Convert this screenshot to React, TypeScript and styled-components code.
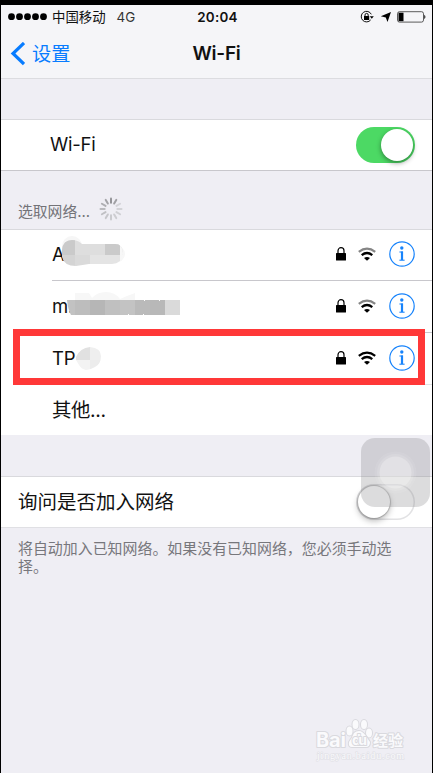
import React from 'react';
import styled, { createGlobalStyle } from 'styled-components';

const GlobalStyle = createGlobalStyle`
  * { box-sizing: border-box; }
  body { margin: 0; background: #000; }
`;

const Screen = styled.main`
  position: relative;
  width: 433px;
  height: 773px;
  overflow: hidden;
  border: solid #000;
  border-width: 5px 1px 0;
  background: #efeef4;
  color: #111;
  font-family: Inter, 'Noto Sans CJK SC', sans-serif;
`;

const Header = styled.header`
  height: 74px;
  background: #f5f5f8;
  border-bottom: 1px solid #dcdce0;
`;

const StatusBar = styled.div`
  display: grid;
  grid-template-columns: 1fr auto 1fr;
  align-items: center;
  height: 24px;
  padding: 0 6px 0 7px;
  font-size: 13.4px;
  line-height: 24px;
`;

const Carrier = styled.div`
  display: flex;
  align-items: center;
  gap: 5px;
`;

const Network = styled.span`
  margin-left: 6px;
  font-size: 13.4px;
  font-weight: 400;
  color: #333;
`;

const Clock = styled.span`
  padding-left: 1px;
  font-size: 13.4px;
  font-weight: 600;
  letter-spacing: 0.3px;
`;

const StatusIcons = styled.div`
  display: flex;
  justify-content: flex-end;
  align-items: center;
`;

const NavBar = styled.nav`
  display: grid;
  grid-template-columns: 1fr auto 1fr;
  align-items: center;
  height: 49px;
  padding: 0 9px;
`;

const BackLink = styled.span`
  display: flex;
  align-items: center;
  gap: 7px;
  color: #087cff;
  font-size: 19.2px;
  line-height: 28px;
`;

const Title = styled.h1`
  margin: 0;
  font-size: 19px;
  font-weight: 600;
  letter-spacing: -0.25px;
  line-height: 28px;
`;

const Group = styled.section<{ $top: number }>`
  margin-top: ${(p) => p.$top}px;
  background: #fff;
  border-top: 1px solid #d9d9dd;
`;

const SettingRow = styled.div<{ $indent: number; $line: string }>`
  display: flex;
  align-items: center;
  justify-content: space-between;
  height: 51px;
  padding: 0 17px 0 ${(p) => p.$indent}px;
  border-bottom: 1px solid ${(p) => p.$line};
  font-size: 19.5px;
  line-height: 30px;
`;

const Latin = styled.span`
  padding-bottom: 2px;
  font-size: 18.5px;
  letter-spacing: -0.2px;
`;

const Track = styled.span<{ $on: boolean }>`
  display: flex;
  justify-content: ${(p) => (p.$on ? 'flex-end' : 'flex-start')};
  width: 59px;
  height: 36px;
  padding: 2px;
  border-radius: 18px;
  background: ${(p) => (p.$on ? '#4cd964' : '#fff')};
  box-shadow: ${(p) => (p.$on ? 'none' : 'inset 0 0 0 1.5px #e2e2e4')};
`;

const Knob = styled.span<{ $on: boolean }>`
  width: 32px;
  height: 32px;
  border-radius: 50%;
  background: #fff;
  box-shadow: ${(p) =>
    p.$on ? '0 2px 5px rgba(0,0,0,.4)' : '0 0 1px 1px rgba(0,0,0,.2), 0 3px 6px rgba(0,0,0,.28)'};
`;

const SectionLabel = styled.div`
  display: flex;
  align-items: center;
  gap: 9px;
  height: 58px;
  padding: 18px 0 0 17px;
  color: #737378;
  font-size: 14.8px;
  line-height: 22px;
`;

const LabelText = styled.span`
  padding-top: 5px;
`;

const NetworkRow = styled.div`
  display: flex;
  align-items: center;
  height: 52px;
  margin-left: 51px;
  padding: 0 17px 2px 0;
  border-bottom: 1px solid #c8c7cc;
  font-size: 19px;
  line-height: 30px;
  &:first-child { height: 51px; }
  &:nth-child(3) { border-bottom-color: #e2e2e5; }
  &:last-child { border-bottom: 0; height: 50px; padding-bottom: 0; }
`;

const NetworkName = styled.span`
  position: relative;
  flex: 1;
  font-size: 18.5px;
  letter-spacing: -0.2px;
`;

const OtherName = styled.span`
  font-size: 19.4px;
  letter-spacing: -0.35px;
`;

const Blur = styled.svg`
  position: absolute;
  left: 0;
  top: -3px;
  overflow: visible;
`;

const RowIcons = styled.span`
  display: flex;
  align-items: center;
  gap: 12px;
  & > svg:last-child { margin-left: 1px; }
`;

const Highlight = styled.div`
  position: absolute;
  left: 12px;
  top: 324px;
  width: 412px;
  height: 56px;
  border: 7px solid #ff3838;
`;

const Footnote = styled.p`
  margin: 0;
  padding: 12px 36px 0 17px;
  color: #77777c;
  font-size: 14.95px;
  line-height: 18.3px;
`;

const AssistiveTouch = styled.div`
  position: absolute;
  left: 360px;
  top: 433px;
  width: 69px;
  height: 69px;
  border-radius: 14px;
  background: rgba(125, 125, 130, 0.27);
`;

const Ring = styled.svg`
  display: block;
`;

const Watermark = styled.svg`
  position: absolute;
  left: 311px;
  top: 709px;
`;

const LockIcon = () => (
  <svg width="10" height="14" viewBox="0 0 10 14">
    <path d="M2 7V3.7a3 3 0 0 1 6 0V7" fill="none" stroke="#000" strokeWidth="1.2" />
    <rect x="0" y="6" width="10" height="7.5" rx=".5" />
  </svg>
);

const WifiIcon = ({ strong }: { strong: boolean }) => (
  <svg width="18" height="14" viewBox="0 0 18 14" fill="none">
    <path d="M.8 4.8Q9-1.4 17.2 4.800" stroke={strong ? '#000' : '#858585'} strokeWidth="2.2" />
    <path d="M3.700 8.200Q9 3.800 14.300 8.200" stroke="#000" strokeWidth="2.2" />
    <path d="M6 11Q9 8.800 12 11L9 13.800z" fill="#000" />
  </svg>
);

const InfoIcon = () => (
  <svg width="26" height="26" viewBox="0 0 26 26" fill="none" stroke="#1783fb">
    <circle cx="13" cy="13" r="12.2" strokeWidth="1.2" />
    <circle cx="12.800" cy="7" r="1.700" fill="#1783fb" stroke="none" />
    <path d="M10.400 11H13.400V19" strokeWidth="1.1" />
    <path d="M13 10.500V19" strokeWidth="2.2" />
    <path d="M10.400 19.200H15.600" strokeWidth="1.1" />
  </svg>
);

const spokeColors = [
  '#949498', '#a0a0a4', '#d4d4d8', '#d2d2d6', '#d0d0d4', '#cdcdd1',
  '#cacace', '#c6c6ca', '#c0c0c4', '#b9b9bd', '#aeaeb2', '#a4a4a8',
];

const Spinner = () => (
  <svg width="24" height="24" viewBox="-12 -12 24 24">
    {spokeColors.map((color, i) => (
      <path
        key={i}
        d="M0-6.3V-10.5"
        stroke={color}
        strokeWidth="2"
        strokeLinecap="round"
        transform={`rotate(${i * 30})`}
      />
    ))}
  </svg>
);

const MosaicA = () => (
  <Blur width="120" height="44">
    <defs>
      <clipPath id="smudge-a">
        <path d="M10 14Q11 4 20 4Q26 4 30 8H63Q71 8 71 17.500Q70 27.500 60 28H37L24 30Q12 30 10 21z" />
      </clipPath>
    </defs>
    <circle cx="20" cy="10" r="10" fill="#f6f6f6" />
    <ellipse cx="63" cy="18" rx="10" ry="9" fill="#f7f7f7" />
    <g clipPath="url(#smudge-a)">
      <path fill="#dedede" d="M10 4h61v15H10z" />
      <path fill="#cacaca" d="M10 4h13v15H10zM53 4h15v15H53z" />
      <path fill="#d4d4d4" d="M10 19h13v12H10z" />
      <path fill="#dadada" d="M23 19h15v12H23z" />
      <path fill="#e4e4e4" d="M38 19h30v12H38z" />
      <path fill="#f7f7f7" d="M68 4h4v27h-4z" />
    </g>
  </Blur>
);

const MosaicM = () => (
  <Blur width="140" height="44">
    <g transform="translate(0 1)">
      <path fill="#f7f7f7" d="M23 4h14l3 5q5-6 14-6t14 7l7-3 8-3v7H23z" />
      <path fill="#c2c2c2" d="M15 11h8v15h-4q-3-5-4-15z" />
      {['#bdbdbd', '#b6b6b6', '#c0c0c0', '#c3c3c3', '#bababa', '#b8b8b8', '#dadada'].map((c, i) => (
        <rect key={i} x={23 + i * 15} y="11" width="15" height="15" fill={c} />
      ))}
      <path fill="#fff" d="M92 11h1v1h-1zM107 11h1v1h-1zM76 25h1v1h-1zM91 25h1v1h-1z" />
    </g>
  </Blur>
);

const MosaicT = () => (
  <Blur width="80" height="44">
    <defs>
      <clipPath id="smudge-t">
        <path d="M24 17Q28 8 38 7Q49 8 49 16Q49 24 43 27Q38 30 34 30Q29 29 27 25L24 20z" />
      </clipPath>
    </defs>
    <g clipPath="url(#smudge-t)">
      <path fill="#e1e1e1" d="M23 6h15v14H23z" />
      <path fill="#efefef" d="M38 6h14v14H38z" />
      <path fill="#f3f3f3" d="M23 20h15v11H23z" />
      <path fill="#ececec" d="M38 20h14v11H38z" />
    </g>
  </Blur>
);

const networks = [
  { name: 'A', strong: false, smudge: <MosaicA /> },
  { name: 'm.', strong: false, smudge: <MosaicM /> },
  { name: 'TP', strong: true, smudge: <MosaicT /> },
];

const Toggle = ({ on }: { on: boolean }) => (
  <Track $on={on}>
    <Knob $on={on} />
  </Track>
);

export default function App() {
  return (
    <>
      <GlobalStyle />
      <Screen>
        <Header>
          <StatusBar>
            <Carrier>
              <svg width="39" height="8" viewBox="0 0 39 8">
                {[3.5, 11.5, 19.5, 27.5, 35.5].map((x) => (
                  <circle key={x} cx={x} cy="3.7" r="3.4" />
                ))}
              </svg>
              <span>中国移动</span>
              <Network>4G</Network>
            </Carrier>
            <Clock>20:04</Clock>
            <StatusIcons>
              <svg width="66" height="14" viewBox="0 0 66 14">
                <path d="M10.700 9.900A5.300 5.300 0 1 1 11.300 4.300" fill="none" stroke="#111" strokeWidth="1" />
                <path d="M9.800 6.200h4l-2 2.600z" />
                <rect x="4" y="6" width="5.200" height="4" />
                <path d="M5 6.500V5a1.600 1.600 0 0 1 3.200 0v1.500" fill="none" stroke="#111" strokeWidth="1" />
                <path d="M31 2L27.500 12L25.800 7.500L20.800 6.200z" />
                <rect x="37.500" y="1.700" width="26" height="10.400" rx="2" fill="none" stroke="#333" strokeWidth=".8" />
                <rect x="38.500" y="2.700" width="5" height="8.500" />
                <path d="M64.300 4.800q2.200 2.200 0 4.400z" />
              </svg>
            </StatusIcons>
          </StatusBar>
          <NavBar>
            <BackLink>
              <svg width="15" height="24" viewBox="0 0 15 24">
                <path d="M14 1L3 11.500L14 22" fill="none" stroke="#087cff" strokeWidth="3.2" />
              </svg>
              设置
            </BackLink>
            <Title>Wi-Fi</Title>
          </NavBar>
        </Header>

        <Group $top={40}>
          <SettingRow $indent={49} $line="#c8c7cc">
            <Latin>Wi-Fi</Latin>
            <Toggle on />
          </SettingRow>
        </Group>

        <SectionLabel>
          <LabelText>选取网络...</LabelText>
          <Spinner />
        </SectionLabel>

        <Group $top={0}>
          {networks.map((n) => (
            <NetworkRow key={n.name}>
              <NetworkName>
                {n.name}
                {n.smudge}
              </NetworkName>
              <RowIcons>
                <LockIcon />
                <WifiIcon strong={n.strong} />
                <InfoIcon />
              </RowIcons>
            </NetworkRow>
          ))}
          <NetworkRow>
            <OtherName>其他...</OtherName>
          </NetworkRow>
        </Group>

        <Group $top={41}>
          <SettingRow $indent={17} $line="#e0e0e4">
            <span>询问是否加入网络</span>
            <Toggle on={false} />
          </SettingRow>
        </Group>
        <Footnote>将自动加入已知网络。如果没有已知网络，您必须手动选择。</Footnote>

        <Highlight />

        <AssistiveTouch>
          <Ring width="69" height="69" viewBox="0 0 69 69">
            <circle cx="34.5" cy="34.5" r="21" fill="#fff" opacity=".08" />
            <circle cx="34.5" cy="34.5" r="18.5" fill="#fff" opacity=".12" />
            <circle cx="34.5" cy="34.5" r="16" fill="#fff" opacity=".25" />
          </Ring>
        </AssistiveTouch>

        <Watermark width="96" height="54" viewBox="0 0 96 54">
          <g fill="#fafafc" stroke="#d9d9de" strokeWidth="2" paintOrder="stroke" strokeLinejoin="round">
            <ellipse cx="37.500" cy="17" rx="3" ry="4.500" />
            <ellipse cx="43.500" cy="10.500" rx="3" ry="4.500" />
            <ellipse cx="52" cy="10.500" rx="3" ry="4.500" />
            <ellipse cx="57" cy="19" rx="3" ry="4.500" />
            <path d="M47 17C52 17 55 24 58 28Q58 33 54 33H40Q36 33 37 28Q40 24 42 19Q44 17 47 17z" />
            <text x="4" y="33" fontSize="20" fontWeight="700" fontFamily="Inter" textLength="30">Bai</text>
            <text x="40" y="31" fontSize="14" fontWeight="700" fontFamily="Inter" textLength="15">du</text>
            <text x="61" y="32" fontSize="15" fontWeight="700" fontFamily="Noto Sans CJK SC" textLength="30">经验</text>
            <text x="5" y="45" fontSize="10" fontFamily="Liberation Serif" textLength="87" strokeWidth="1.2" stroke="#e0e0e5">jingyan.baidu.com</text>
          </g>
        </Watermark>
      </Screen>
    </>
  );
}
